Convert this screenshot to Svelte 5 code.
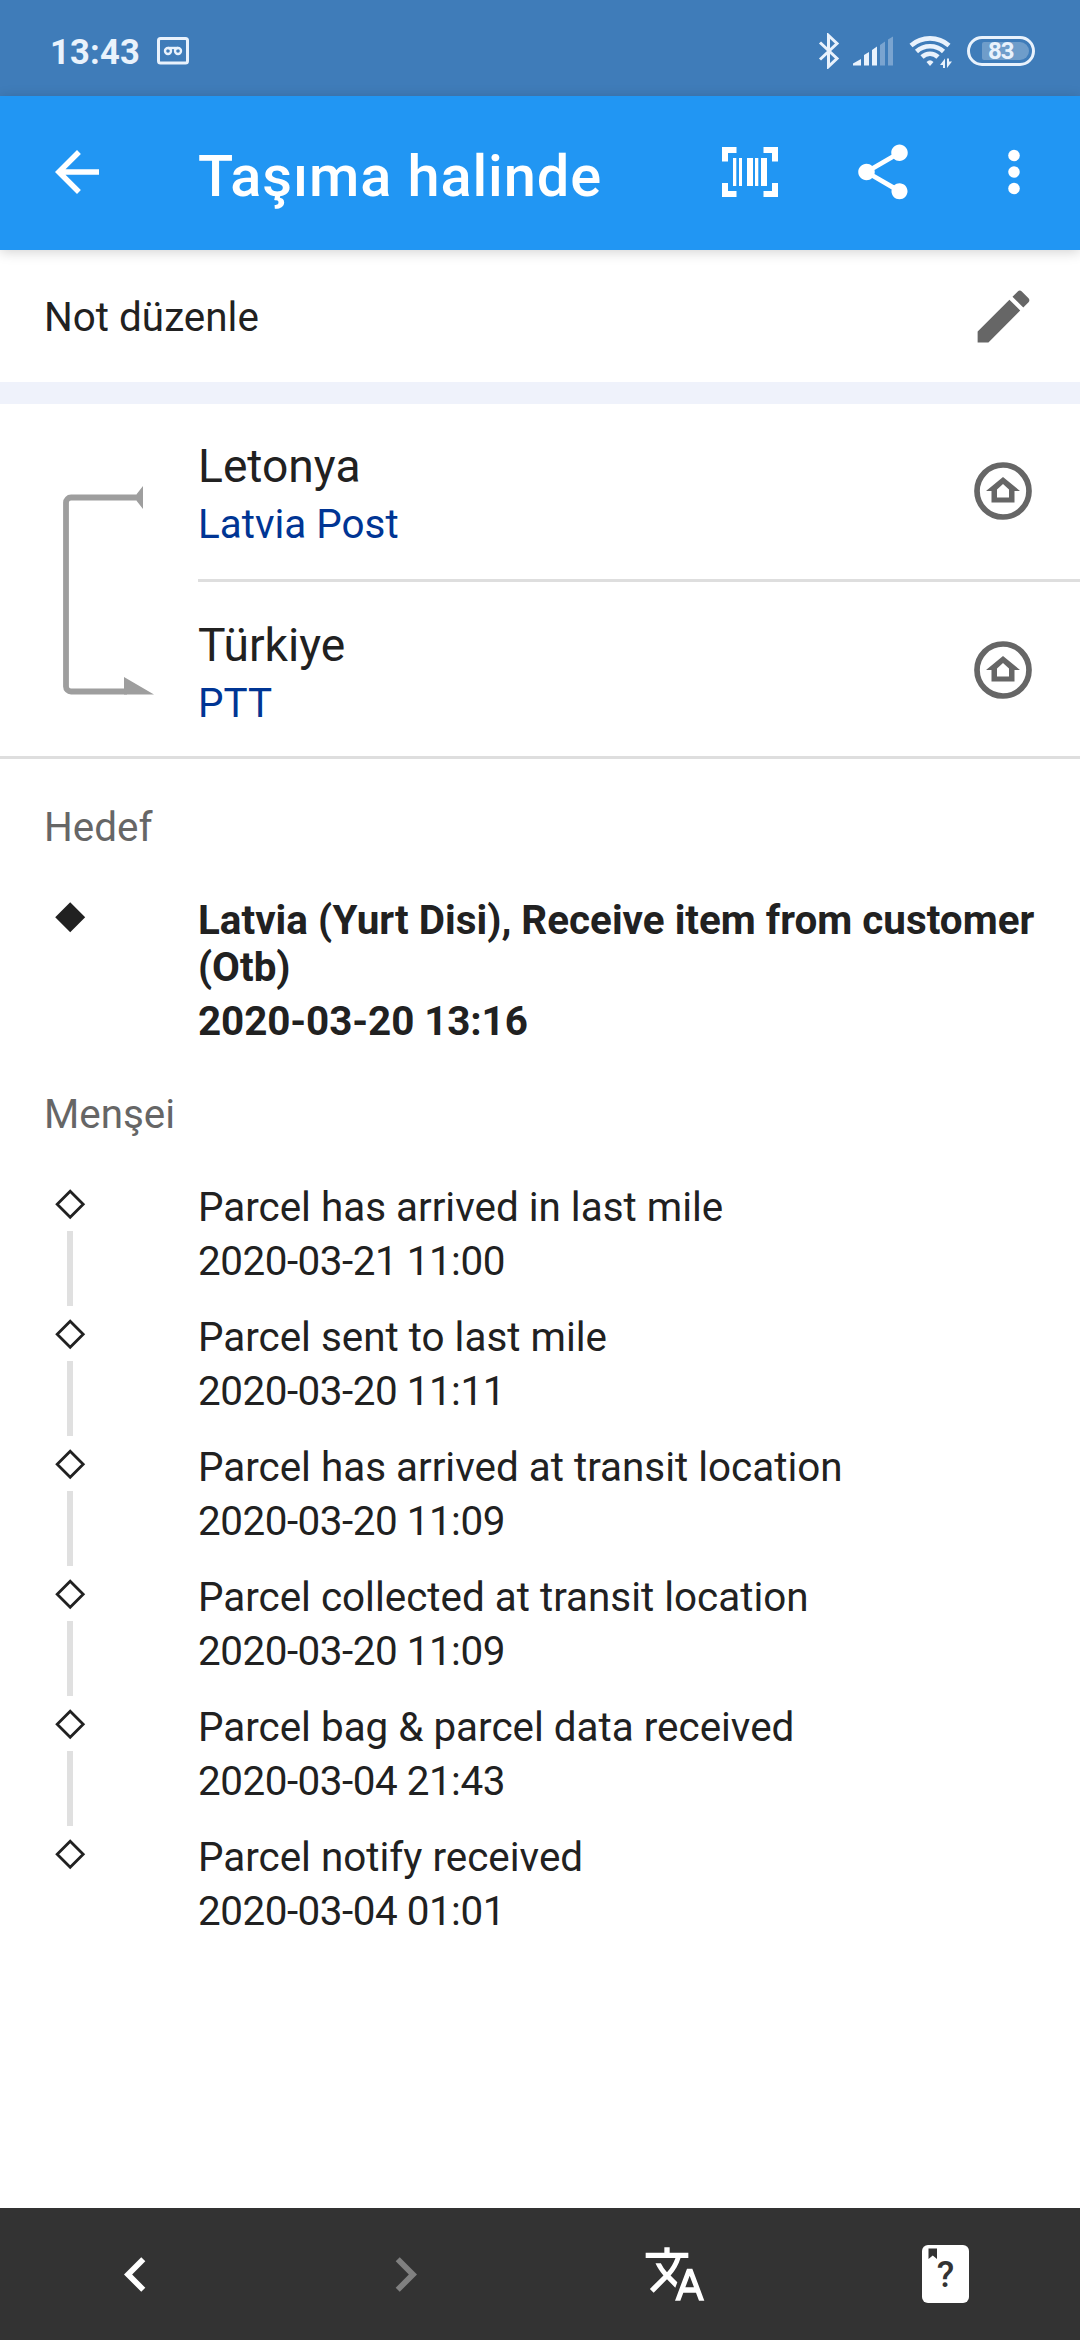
<script lang="ts">
	type Leg = { country: string; carrier: string }
	type Event = { text: string; date: string }

	const legs: Leg[] = [
		{ country: 'Letonya', carrier: 'Latvia Post' },
		{ country: 'Türkiye', carrier: 'PTT' }
	]

	const destination: Event[] = [
		{
			text: 'Latvia (Yurt Disi), Receive item from customer (Otb)',
			date: '2020-03-20 13:16'
		}
	]

	const origin: Event[] = [
		{ text: 'Parcel has arrived in last mile', date: '2020-03-21 11:00' },
		{ text: 'Parcel sent to last mile', date: '2020-03-20 11:11' },
		{ text: 'Parcel has arrived at transit location', date: '2020-03-20 11:09' },
		{ text: 'Parcel collected at transit location', date: '2020-03-20 11:09' },
		{ text: 'Parcel bag & parcel data received', date: '2020-03-04 21:43' },
		{ text: 'Parcel notify received', date: '2020-03-04 01:01' }
	]
</script>

<div class="screen">
	<div class="status">
		<span class="clock">13:43</span>
		<svg class="recorder" width="32" height="28" viewBox="0 0 32 28">
			<rect x="1.5" y="1.5" width="29" height="24.5" rx="2" />
			<circle cx="11" cy="14" r="3" />
			<circle cx="21" cy="14" r="3" />
			<path d="M11 11h10" />
		</svg>
		<svg class="bluetooth" width="22" height="36" viewBox="0 0 22 36">
			<path d="M2 9.500l17 16-8.500 8V2.500l8.500 8L2 26.500" />
		</svg>
		<svg class="signal" width="41" height="30" viewBox="0 0 41 30">
			<path d="M0 29.500v-2l8-4.500v6.500zM11 29.500V19l5-3v13.500zM19 29.500V14l5-3.500v19z" />
			<path class="dim" d="M27 29.500V9l5-3.500v24zM35 29.500V3.500L40 .5v29z" />
		</svg>
		<svg class="wifi" width="44" height="34" viewBox="0 0 44 34">
			<path class="arc" d="M2 10.500a29 29 0 0 1 38 0M7.500 16.500a20 20 0 0 1 27 0M13 22a11.500 11.500 0 0 1 16 0" />
			<path d="M17.500 27q3.500-3.500 7 0l-3.500 4zM36 23.500v9.500h-2v-3h-3zM38 33v-9.500h2v3h3z" />
		</svg>
		<div class="battery"><span>83</span></div>
	</div>

	<header>
		<svg width="66" height="66" viewBox="0 0 24 24">
			<path d="M20 11H7.830l5.590-5.590L12 4l-8 8 8 8 1.410-1.410L7.830 13H20v-2z" />
		</svg>
		<h1>Taşıma halinde</h1>
		<svg class="scan" width="56" height="50" viewBox="0 0 56 50">
			<path d="M0 0h14.500v6H6v8.500H0zM41.500 0H56v14.500h-6V6h-8.500zM0 36h6v8h8.500v6H0zM50 36h6v14H41.500v-6H50z" />
			<path d="M11 11h3.300v28H11zM17 11h3v28h-3zM25 11h6v28h-6zM33 11h3.300v28H33zM39 11h6v28h-6z" />
		</svg>
		<svg class="share" width="66" height="66" viewBox="0 0 24 24">
			<path
				d="M18 16.080c-.76 0-1.440.3-1.960.77L8.910 12.700c.05-.23.09-.46.09-.7s-.04-.47-.09-.7l7.050-4.110c.54.5 1.250.81 2.040.81 1.660 0 3-1.340 3-3s-1.340-3-3-3-3 1.340-3 3c0 .24.04.47.09.7L8.040 9.810C7.500 9.310 6.790 9 6 9c-1.660 0-3 1.340-3 3s1.340 3 3 3c.79 0 1.500-.31 2.040-.81l7.120 4.160c-.05.21-.08.43-.08.65 0 1.610 1.310 2.920 2.920 2.920s2.920-1.310 2.920-2.920-1.310-2.920-2.920-2.920z"
			/>
		</svg>
		<svg width="66" height="66" viewBox="0 0 24 24">
			<circle cx="12" cy="6" r="2.100" />
			<circle cx="12" cy="12" r="2.100" />
			<circle cx="12" cy="18" r="2.100" />
		</svg>
	</header>

	<div class="note">
		<span>Not düzenle</span>
		<svg width="69" height="69" viewBox="0 0 24 24">
			<path
				d="M3 17.250V21h3.750L17.810 9.940l-3.750-3.750L3 17.250zM20.710 7.040c.39-.39.39-1.020 0-1.410l-2.340-2.340c-.39-.39-1.020-.39-1.410 0l-1.830 1.830 3.750 3.750 1.830-1.830z"
			/>
		</svg>
	</div>

	<div class="route">
		<svg class="bracket" width="93" height="210" viewBox="0 0 93 210">
			<path class="line" d="M75 12.500H10a5 5 0 0 0-5 5v184a5 5 0 0 0 5 5h56" />
			<path d="M73 12.500L82 1v23zM63 192l30 17.500H63z" />
		</svg>
		<div class="legs">
			{#each legs as leg}
				<div class="leg">
					<div>
						<div class="country">{leg.country}</div>
						<div class="carrier">{leg.carrier}</div>
					</div>
					<svg width="60" height="60" viewBox="0 0 60 60">
						<circle cx="30" cy="30" r="26" />
						<path
							fill-rule="evenodd"
							d="M30 16L47 30h-5.500v11.500h-23V30H13zM30 23l-6 5.500v8h12v-8z"
						/>
					</svg>
				</div>
			{/each}
		</div>
	</div>

	{#snippet timeline(title: string, events: Event[], latest: boolean)}
		<section>
			<h2>{title}</h2>
			<ul class:latest>
				{#each events as event}
					<li>
						<div class="track">
							<svg width="32" height="32" viewBox="0 0 32 32">
								<path d="M16.200 3.300l13 13-13 13-13-13z" />
							</svg>
						</div>
						<div class="event">
							<p>{event.text}</p>
							<p class="date">{event.date}</p>
						</div>
					</li>
				{/each}
			</ul>
		</section>
	{/snippet}

	{@render timeline('Hedef', destination, true)}
	{@render timeline('Menşei', origin, false)}

	<nav>
		<svg width="69" height="69" viewBox="0 0 24 24">
			<path d="M15.410 7.410L14 6l-6 6 6 6 1.410-1.410L10.830 12z" />
		</svg>
		<svg class="disabled" width="69" height="69" viewBox="0 0 24 24">
			<path d="M10 6L8.590 7.410 13.170 12l-4.580 4.590L10 18l6-6z" />
		</svg>
		<svg width="64" height="64" viewBox="0 0 24 24">
			<path
				d="M12.870 15.070l-2.540-2.510.03-.03c1.740-1.940 2.980-4.170 3.710-6.530H17V4h-7V2H8v2H1v1.990h11.170C11.500 7.920 10.440 9.750 9 11.350 8.070 10.320 7.300 9.190 6.690 8h-2c.73 1.630 1.730 3.170 2.980 4.560l-5.090 5.020L4 19l5-5 3.110 3.110.76-2.040zM18.500 10h-2L12 22h2l1.120-3h4.750L21 22h2l-4.500-12zm-2.620 7l1.620-4.330L19.120 17h-3.240z"
			/>
		</svg>
		<svg width="47" height="58" viewBox="0 0 47 58">
			<rect width="47" height="58" rx="6" />
			<path class="mark" d="M6.500 3.500h8.500V14l-4.250-3.500L6.500 14z" />
			<text x="23.500" y="42">?</text>
		</svg>
	</nav>
</div>

<style>
	:global(body) {
		margin: 0;
		background: #fff;
	}

	.screen {
		display: flex;
		flex-direction: column;
		width: 1080px;
		height: 2340px;
		overflow: hidden;
		color: #212121;
		background: #fff;
		font-family: Roboto, sans-serif;
		font-size: 40.4px;
		line-height: 47px;
	}

	svg {
		display: block;
		flex: none;
	}

	.status {
		display: flex;
		align-items: center;
		box-sizing: border-box;
		height: 96px;
		padding: 6px 45px 0 50px;
		color: #e9f2fc;
		background: #3f7cb9;
		fill: #e9f2fc;
	}

	.clock {
		width: 107px;
		padding-top: 2px;
		font-size: 34.5px;
		font-weight: 700;
		letter-spacing: 0.2px;
	}

	.recorder,
	.bluetooth {
		fill: none;
		stroke: currentColor;
		stroke-width: 3;
	}

	.recorder circle,
	.recorder path {
		stroke-width: 2.4;
	}

	.bluetooth {
		margin-left: auto;
	}

	.signal {
		margin-left: 13px;
	}

	.signal .dim {
		opacity: 0.35;
	}

	.wifi {
		margin: 2px 14px 0 15px;
	}

	.wifi .arc {
		fill: none;
		stroke: currentColor;
		stroke-width: 4.6;
	}

	.battery {
		box-sizing: border-box;
		width: 68px;
		height: 30px;
		padding: 3px 3px 3px 12px;
		border: 3px solid;
		border-radius: 15px;
	}

	.battery span {
		display: block;
		height: 18px;
		padding-left: 6px;
		border-radius: 2px 9px 9px 2px;
		background: rgba(255, 255, 255, 0.25);
		font-size: 24px;
		font-weight: 700;
		letter-spacing: -1px;
		line-height: 19px;
	}

	header {
		display: flex;
		z-index: 1;
		align-items: center;
		box-sizing: border-box;
		height: 154px;
		padding: 0 33px 2px 44px;
		color: #fff;
		background: #2196f3;
		box-shadow: 0 2px 12px rgba(0, 0, 0, 0.18);
		fill: #fff;
	}

	h1 {
		flex: 1;
		margin: 0 0 0 88px;
		padding-top: 7px;
		font-size: 57.75px;
		font-weight: 500;
		letter-spacing: 0.9px;
		line-height: 68px;
	}

	.share {
		margin: 0 65px 0 72px;
	}

	.note {
		display: flex;
		align-items: center;
		justify-content: space-between;
		height: 132px;
		padding: 0 42px 0 44px;
		border-bottom: 22px solid #eff2fb;
		fill: #666;
	}

	.note span {
		padding-top: 3px;
	}

	.route {
		display: flex;
		gap: 44px;
		padding-left: 61px;
		border-bottom: 3px solid #dedede;
	}

	.bracket {
		margin-top: 81px;
		fill: #9e9e9e;
	}

	.bracket .line {
		fill: none;
		stroke: #9e9e9e;
		stroke-width: 5.8;
	}

	.legs {
		flex: 1;
	}

	.leg {
		display: flex;
		align-items: flex-start;
		justify-content: space-between;
		box-sizing: border-box;
		height: 177px;
		padding: 36px 47px 0 0;
		fill: #666;
	}

	.leg + .leg {
		border-top: 3px solid #dedede;
	}

	.leg:first-child {
		height: 175px;
		padding-top: 35px;
	}

	.leg svg {
		margin-top: 22px;
	}

	.leg circle {
		fill: none;
		stroke: #666;
		stroke-width: 5.7;
	}

	.country {
		margin-bottom: 8px;
		font-size: 46.2px;
		line-height: 54px;
	}

	.carrier {
		color: #003594;
	}

	section {
		padding: 45px 44px 0;
	}

	section + section {
		padding-top: 17px;
	}

	h2 {
		margin: 0 0 46px;
		color: #666;
		font-size: inherit;
		font-weight: 400;
	}

	ul {
		margin: 0;
		padding: 0;
		list-style: none;
	}

	li {
		display: flex;
		gap: 102px;
	}

	.track {
		display: flex;
		flex-direction: column;
		align-items: center;
		gap: 11px;
		width: 52px;
		padding-top: 4px;
		fill: none;
		stroke: #212121;
		stroke-width: 2.8;
	}

	li:not(:last-child) .track::after {
		flex: 0 0 75px;
		width: 6px;
		background: #e0e0e0;
		content: '';
	}

	.event {
		flex: 1;
		padding-bottom: 29px;
	}

	p {
		margin: 0;
	}

	.date {
		margin-top: 7px;
		letter-spacing: -0.48px;
	}

	.latest {
		font-weight: 700;
	}

	.latest .date {
		letter-spacing: -0.1px;
	}

	.latest .track {
		fill: #212121;
	}

	nav {
		display: grid;
		grid-template-columns: repeat(4, 1fr);
		place-items: center;
		height: 132px;
		margin-top: auto;
		background: #333;
		fill: #fff;
	}

	.disabled {
		fill: #808080;
	}

	nav .mark,
	nav text {
		fill: #333;
	}

	nav text {
		font-size: 36px;
		font-weight: 500;
		text-anchor: middle;
	}
</style>
